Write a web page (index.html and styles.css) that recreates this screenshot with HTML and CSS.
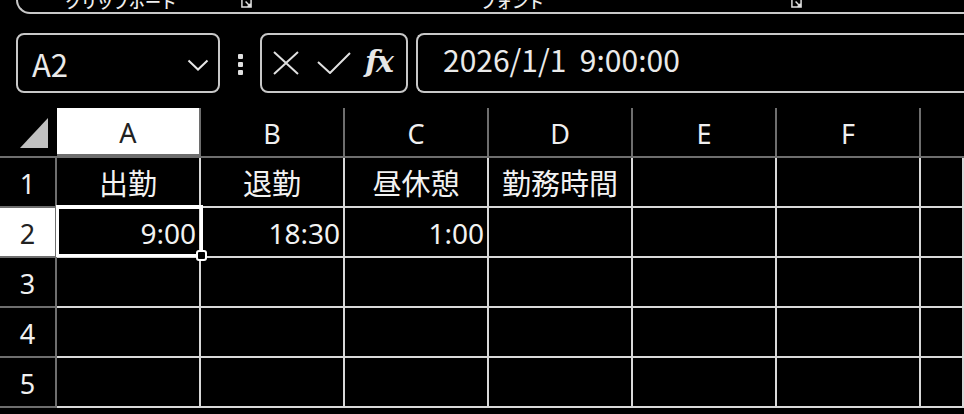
FILE: index.html
```html
<!DOCTYPE html>
<html lang="ja">
<head>
<meta charset="utf-8">
<title>Excel</title>
<link rel="stylesheet" href="styles.css">
</head>
<body>
<div class="ribbon">
  <div class="ribbon-box">
    <div class="group g1">
      <span class="glabel">クリップボード</span>
      <svg class="launcher" viewBox="0 0 12 12"><path d="M1 1H11V11H1Z M5 5L10 10 M7 10H10V7" fill="none" stroke="#e0e0e0" stroke-width="1.6"/></svg>
    </div>
    <div class="group g2">
      <span class="glabel">フォント</span>
      <svg class="launcher" viewBox="0 0 12 12"><path d="M1 1H11V11H1Z M5 5L10 10 M7 10H10V7" fill="none" stroke="#e0e0e0" stroke-width="1.6"/></svg>
    </div>
  </div>
</div>

<div class="fbar">
  <div class="namebox">
    <span class="nb-text">A2</span>
    <svg class="chev" viewBox="0 0 22 12"><path d="M1.5 1.5L11 10.5L20.5 1.5" fill="none" stroke="#e6e6e6" stroke-width="2"/></svg>
  </div>
  <div class="dots"><i></i><i></i><i></i></div>
  <div class="fbtns">
    <svg class="ic-x" viewBox="0 0 26 24"><path d="M1 1L25 23M25 1L1 23" fill="none" stroke="#e0e0e0" stroke-width="2"/></svg>
    <svg class="ic-ok" viewBox="0 0 34 22"><path d="M1 10L13 21L33 1" fill="none" stroke="#e0e0e0" stroke-width="2"/></svg>
    <span class="ic-fx">fx</span>
  </div>
  <div class="formula">2026/1/1&nbsp; 9:00:00</div>
</div>

<div class="sheet">
  <div class="grid">
    <div class="corner"><span class="tri"></span></div>
    <div class="ch sel">A</div>
    <div class="ch">B</div>
    <div class="ch">C</div>
    <div class="ch">D</div>
    <div class="ch">E</div>
    <div class="ch">F</div>
    <div class="ch last"></div>

    <div class="rh">1</div>
    <div class="c jp">出勤</div>
    <div class="c jp">退勤</div>
    <div class="c jp">昼休憩</div>
    <div class="c jp">勤務時間</div>
    <div class="c"></div>
    <div class="c"></div>
    <div class="c"></div>

    <div class="rh sel">2</div>
    <div class="c num">9:00</div>
    <div class="c num">18:30</div>
    <div class="c num">1:00</div>
    <div class="c"></div>
    <div class="c"></div>
    <div class="c"></div>
    <div class="c"></div>

    <div class="rh">3</div>
    <div class="c"></div><div class="c"></div><div class="c"></div><div class="c"></div><div class="c"></div><div class="c"></div><div class="c"></div>

    <div class="rh">4</div>
    <div class="c"></div><div class="c"></div><div class="c"></div><div class="c"></div><div class="c"></div><div class="c"></div><div class="c"></div>

    <div class="rh">5</div>
    <div class="c"></div><div class="c"></div><div class="c"></div><div class="c"></div><div class="c"></div><div class="c"></div><div class="c"></div>
  </div>
  <div class="selection"><span class="handle"></span></div>
</div>
</body>
</html>
```

FILE: styles.css
```css
* { box-sizing: border-box; }

html, body {
  margin: 0;
  padding: 0;
  background: #000;
  color: #f0f0f0;
  font-family: "Noto Sans", "Noto Sans CJK JP", sans-serif;
  overflow: hidden;
  width: 964px;
  height: 414px;
}

/* ribbon remnant */
.ribbon {
  height: 14px;
  overflow: hidden;
}
.ribbon-box {
  margin-left: 16px;
  height: 14px;
  border: 2px solid #c8c8c8;
  border-top: 0;
  border-right: 0;
  border-bottom-left-radius: 14px;
  display: flex;
  align-items: flex-end;
  overflow: hidden;
}
.group {
  display: flex;
  align-items: flex-end;
  height: 40px;
  flex: none;
}
.g1 { width: 240px; padding-left: 47px; }
.g2 { width: 550px; padding-left: 222px; }
.glabel {
  font-family: "Noto Sans CJK JP", sans-serif;
  font-size: 16px;
  font-weight: 500;
  line-height: 16px;
  margin-bottom: 3px;
  color: #eeeeee;
  white-space: nowrap;
}
.launcher {
  width: 11px;
  height: 11px;
  margin-left: auto;
  margin-right: 6px;
  margin-bottom: 4px;
}

/* formula bar */
.fbar {
  display: flex;
  align-items: stretch;
  height: 60px;
  margin-top: 19px;
}
.namebox {
  margin-left: 16px;
  width: 204px;
  border: 2px solid #c8c8c8;
  border-radius: 8px;
  display: flex;
  align-items: center;
  padding: 1px 9px 0 14px;
}
.nb-text {
  font-family: "Noto Sans CJK JP", sans-serif;
  font-size: 31px;
  line-height: 1;
  color: #eaeaea;
}
.chev {
  width: 22px;
  height: 12px;
  margin-left: auto;
  margin-top: 2px;
}
.dots {
  width: 40px;
  display: flex;
  flex-direction: column;
  align-items: center;
  justify-content: center;
  gap: 3px;
  padding-top: 3px;
}
.dots i {
  display: block;
  width: 5px;
  height: 5px;
  border-radius: 1px;
  background: #e0e0e0;
}
.fbtns {
  width: 148px;
  border: 2px solid #c8c8c8;
  border-radius: 8px;
  display: flex;
  align-items: center;
  padding-left: 11px;
}
.ic-x { width: 26px; height: 24px; flex: none; }
.ic-ok { width: 34px; height: 22px; flex: none; margin-left: 18px; }
.ic-fx {
  font-family: "DejaVu Serif", serif;
  font-style: italic;
  font-weight: bold;
  font-size: 30px;
  line-height: 1;
  color: #e6e6e6;
  margin-left: 14px;
  margin-top: -2px;
  letter-spacing: -2px;
}
.formula {
  flex: 1;
  margin-left: 8px;
  border: 2px solid #c8c8c8;
  border-right: 0;
  border-radius: 8px 0 0 8px;
  display: flex;
  align-items: center;
  padding-left: 25px;
  padding-bottom: 9px;
  font-family: "Noto Sans CJK JP", sans-serif;
  font-size: 30px;
  color: #eaeaea;
  white-space: nowrap;
}

/* sheet */
.sheet {
  position: relative;
  margin-top: 15px;
}
.grid {
  display: grid;
  grid-template-columns: 57px repeat(6, 144px) 1fr;
  grid-auto-rows: 50px;
}
.corner {
  border-bottom: 2px solid #6e6e6e;
  position: relative;
}
.tri {
  position: absolute;
  left: 20px;
  top: 10px;
  width: 28px;
  height: 30px;
  background: #c0c0c0;
  clip-path: polygon(100% 0, 100% 100%, 0 100%);
}
.ch {
  border-right: 2px solid #6e6e6e;
  border-bottom: 2px solid #6e6e6e;
  display: flex;
  align-items: center;
  justify-content: center;
  font-size: 27px;
  padding-top: 2px;
  color: #f0f0f0;
}
.ch.last { border-right: 0; }
.ch.sel {
  background: #ffffff;
  color: #222222;
  border-bottom: 4px solid #6e6e6e;
}
.rh {
  border-right: 2px solid #6e6e6e;
  border-bottom: 2px solid #6e6e6e;
  display: flex;
  align-items: center;
  justify-content: center;
  font-size: 27px;
  padding-top: 2px;
  color: #f0f0f0;
}
.rh.sel {
  background: #ffffff;
  color: #222222;
}
.c {
  border-right: 2px solid #d8d8d8;
  border-bottom: 2px solid #d8d8d8;
  display: flex;
  align-items: center;
  justify-content: center;
  font-size: 28px;
  color: #f2f2f2;
  white-space: nowrap;
  overflow: hidden;
}
.c.jp {
  font-family: "Noto Sans CJK JP", sans-serif;
  font-size: 29px;
}
.c.num {
  justify-content: flex-end;
  padding-right: 3px;
  padding-top: 2px;
}

.selection {
  position: absolute;
  left: 56px;
  top: 97px;
  width: 147px;
  height: 52px;
  border: 3px solid #ffffff;
  border-top-width: 4px;
  pointer-events: none;
}
.handle {
  position: absolute;
  right: -7px;
  bottom: -7px;
  width: 11px;
  height: 11px;
  border: 2px solid #ffffff;
  border-radius: 3px;
  background: #000;
}
```
